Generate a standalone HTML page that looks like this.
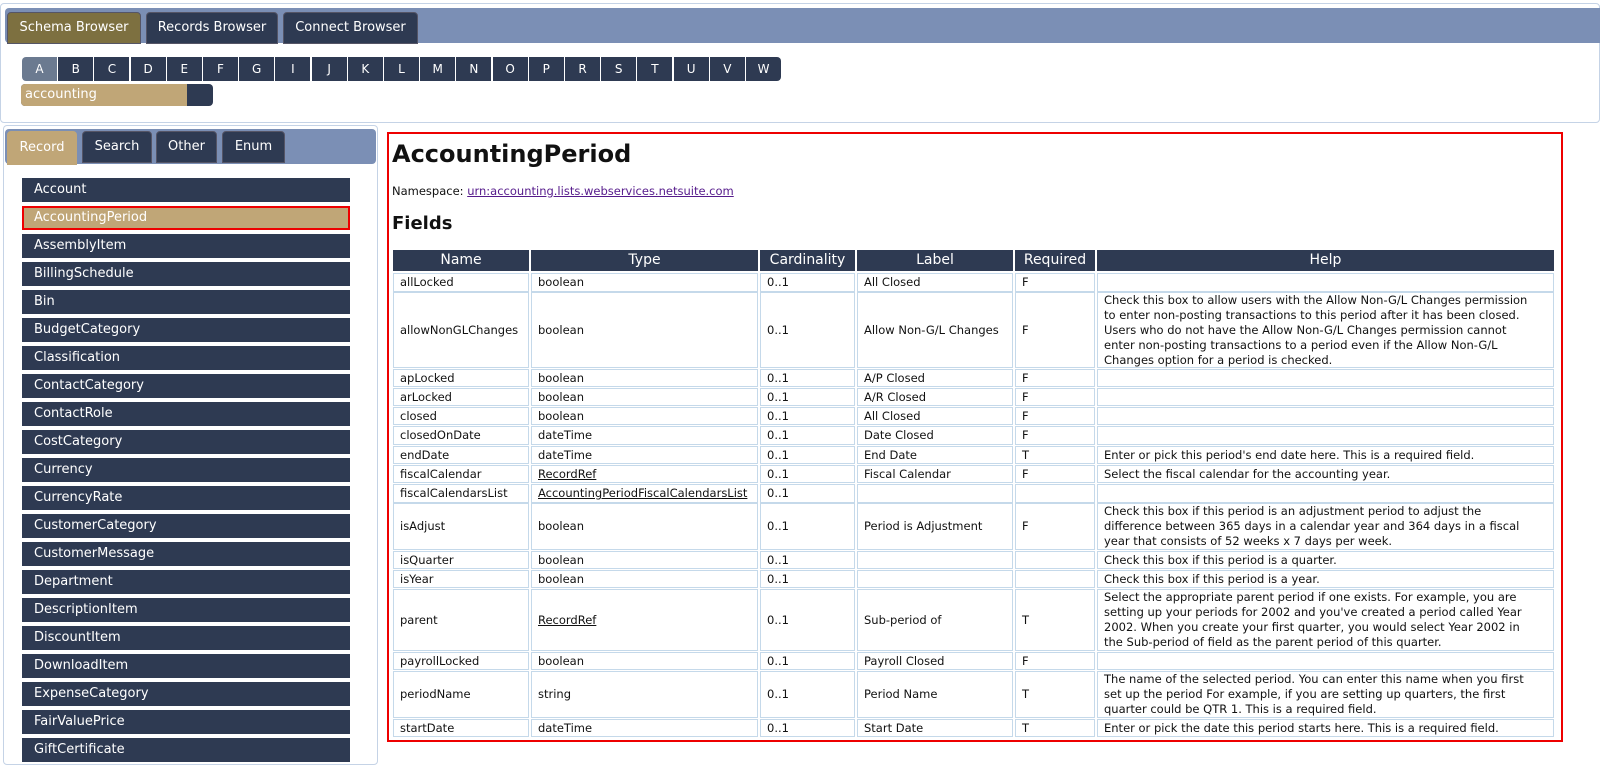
<!DOCTYPE html>
<html><head><meta charset="utf-8"><style>
*{box-sizing:border-box;margin:0;padding:0}
body{width:1600px;height:765px;overflow:hidden;background:#fff;font-family:"DejaVu Sans","Liberation Sans",sans-serif;position:relative;color:#111}
.a{position:absolute}
.tab{position:absolute;color:#fff;font-size:13px;text-align:center;border-radius:4px 4px 0 0;line-height:30px;background:#2e3a52;border:1px solid #556}
.lt{position:absolute;top:57px;height:24px;width:35px;background:#2e3a52;color:#fff;font-size:12px;text-align:center;line-height:24px}
.li{position:absolute;left:22px;width:328px;height:24px;background:#2e3a52;color:#fff;font-size:13px;line-height:24px;padding-left:12px}
.c{position:absolute;border:1px solid #c5d9ea;font-size:11.5px;padding:0 6px;display:flex;align-items:center;white-space:nowrap;line-height:15px;background:#fff}
.h{position:absolute;background:#2e3a52;color:#fff;font-size:14px;text-align:center;line-height:21px;top:250px;height:21px}
a{color:#551a8b;text-decoration:underline}
</style></head><body>
<div class="a" style="left:0;top:3px;width:1600px;height:120px;border:1px solid #c5d3e6;border-radius:4px"></div>
<div class="a" style="left:5px;top:8px;width:1595px;height:35px;background:#7b8fb5;border-radius:4px 0 0 4px"></div>
<div class="tab" style="left:7px;top:12px;width:134px;background:#7d7040">Schema Browser</div>
<div class="tab" style="left:146px;top:12px;width:132px">Records Browser</div>
<div class="tab" style="left:283px;top:12px;width:135px">Connect Browser</div>
<div id="letters"></div>
<div class="a" style="left:21px;top:84px;width:192px;height:22px;background:#2e3a52;border-radius:4px"></div>
<div class="a" style="left:21px;top:84px;width:166px;height:22px;background:#c0a677;border-radius:4px 0 0 4px;color:#fff;font-size:13px;line-height:22px;padding-left:4px">accounting</div>

<div class="a" style="left:3px;top:125px;width:375px;height:640px;border:1px solid #c5d3e6;border-radius:4px"></div>
<div class="a" style="left:5px;top:129px;width:371px;height:35px;background:#7b8fb5;border-radius:4px"></div>
<div class="tab" style="left:7px;top:131px;width:70px;background:#c0a677;border-color:#c0a677;line-height:32px">Record</div>
<div class="tab" style="left:82px;top:131px;width:70px">Search</div>
<div class="tab" style="left:156px;top:131px;width:61px">Other</div>
<div class="tab" style="left:222px;top:131px;width:63px">Enum</div>
<div id="list"></div>

<div class="a" style="left:387px;top:132px;width:1176px;height:610px;border:2px solid #e00"></div>
<div class="a" style="left:392px;top:140px;font-size:24px;font-weight:bold">AccountingPeriod</div>
<div class="a" style="left:392px;top:184px;font-size:11.5px">Namespace: <a>urn:accounting.lists.webservices.netsuite.com</a></div>
<div class="a" style="left:392px;top:213px;font-size:18px;font-weight:bold">Fields</div>
<div id="tbl"></div>
<script>
var L="ABCDEFGIJKLMNOPRSTUVW".split(""),h="";
L.forEach(function(c,i){h+='<div class="lt" style="left:'+(22+i*36.2)+'px;'+(i==0?'background:#6b7a90;border-radius:4px 0 0 4px;':'')+(i==L.length-1?'border-radius:0 4px 4px 0;':'')+'">'+c+'</div>'});
document.getElementById('letters').innerHTML=h;
var N="Account AccountingPeriod AssemblyItem BillingSchedule Bin BudgetCategory Classification ContactCategory ContactRole CostCategory Currency CurrencyRate CustomerCategory CustomerMessage Department DescriptionItem DiscountItem DownloadItem ExpenseCategory FairValuePrice GiftCertificate".split(" ");h="";
N.forEach(function(n,i){h+='<div class="li" style="top:'+(178+i*28)+'px;'+(i==1?'background:#c0a677;border:2px solid #e00;padding-left:10px;line-height:20px;':'')+'">'+n+'</div>'});
document.getElementById('list').innerHTML=h;
var X=[393,531,760,857,1015,1097,1556];
var H=["Name","Type","Cardinality","Label","Required","Help"];h="";
H.forEach(function(t,i){h+='<div class="h" style="left:'+X[i]+'px;width:'+(X[i+1]-X[i]-2)+'px">'+t+'</div>'});
var R=[
[273,291,"allLocked","boolean","0..1","All Closed","F",""],
[292,367,"allowNonGLChanges","boolean","0..1","Allow Non-G/L Changes","F","Check this box to allow users with the Allow Non-G/L Changes permission<br>to enter non-posting transactions to this period after it has been closed.<br>Users who do not have the Allow Non-G/L Changes permission cannot<br>enter non-posting transactions to a period even if the Allow Non-G/L<br>Changes option for a period is checked."],
[369,386,"apLocked","boolean","0..1","A/P Closed","F",""],
[388,405,"arLocked","boolean","0..1","A/R Closed","F",""],
[407,424,"closed","boolean","0..1","All Closed","F",""],
[426,444,"closedOnDate","dateTime","0..1","Date Closed","F",""],
[446,463,"endDate","dateTime","0..1","End Date","T","Enter or pick this period's end date here. This is a required field."],
[465,482,"fiscalCalendar","<u>RecordRef</u>","0..1","Fiscal Calendar","F","Select the fiscal calendar for the accounting year."],
[484,502,"fiscalCalendarsList","<u>AccountingPeriodFiscalCalendarsList</u>","0..1","","",""],
[503,549,"isAdjust","boolean","0..1","Period is Adjustment","F","Check this box if this period is an adjustment period to adjust the<br>difference between 365 days in a calendar year and 364 days in a fiscal<br>year that consists of 52 weeks x 7 days per week."],
[551,568,"isQuarter","boolean","0..1","","","Check this box if this period is a quarter."],
[570,587,"isYear","boolean","0..1","","","Check this box if this period is a year."],
[589,650,"parent","<u>RecordRef</u>","0..1","Sub-period of","T","Select the appropriate parent period if one exists. For example, you are<br>setting up your periods for 2002 and you've created a period called Year<br>2002. When you create your first quarter, you would select Year 2002 in<br>the Sub-period of field as the parent period of this quarter."],
[652,669,"payrollLocked","boolean","0..1","Payroll Closed","F",""],
[671,717,"periodName","string","0..1","Period Name","T","The name of the selected period. You can enter this name when you first<br>set up the period For example, if you are setting up quarters, the first<br>quarter could be QTR 1. This is a required field."],
[719,736,"startDate","dateTime","0..1","Start Date","T","Enter or pick the date this period starts here. This is a required field."]];
R.forEach(function(r){for(var i=0;i<6;i++){h+='<div class="c" style="left:'+X[i]+'px;top:'+r[0]+'px;width:'+(X[i+1]-X[i]-2)+'px;height:'+(r[1]-r[0]+1)+'px"><div>'+r[2+i]+'</div></div>'}});
document.getElementById('tbl').innerHTML=h;
</script>
</body></html>
